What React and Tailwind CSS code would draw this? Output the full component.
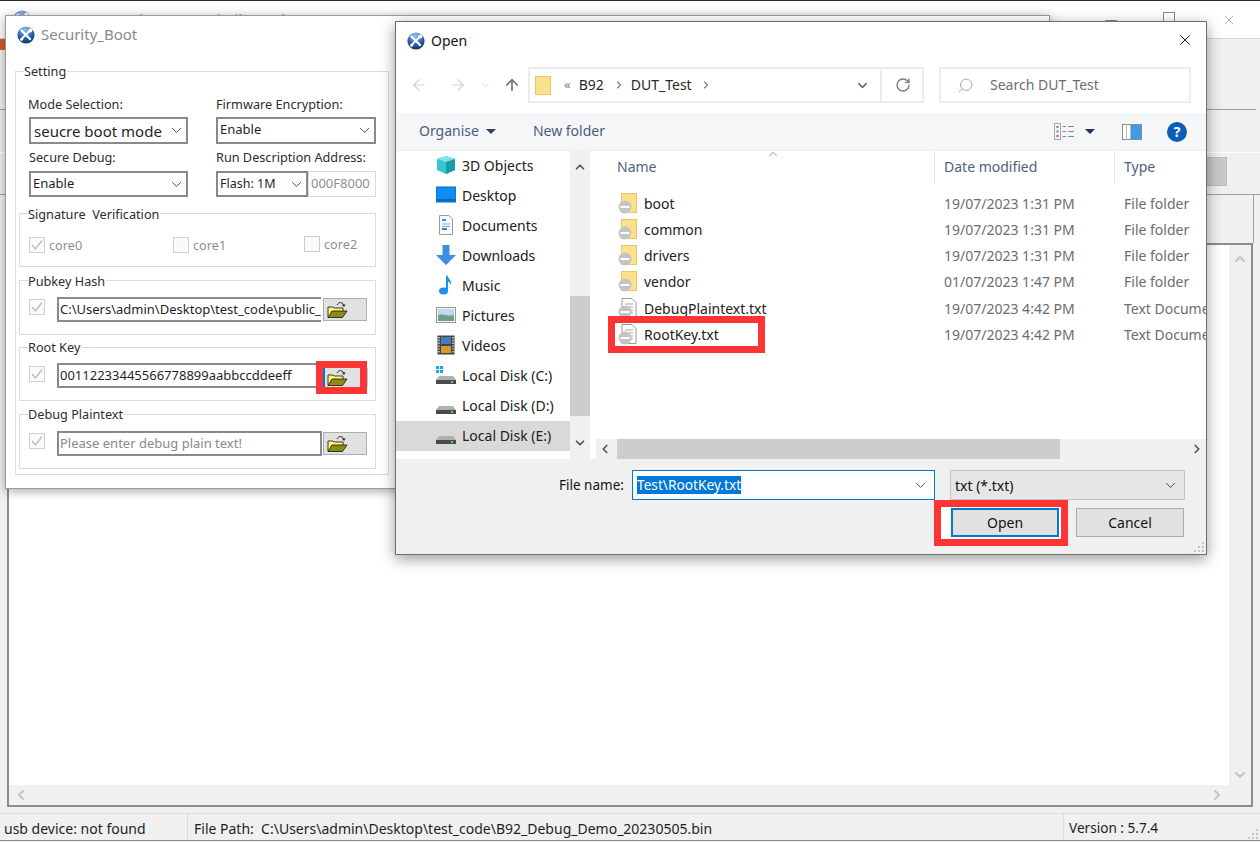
import React from "react";
import { ArrowLeft, ArrowRight, ArrowUp, ChevronDown, ChevronUp, ChevronLeft, ChevronRight, RotateCw, Search, X } from "lucide-react";

const AppIcon = ({ className = "" }) => (
  <svg viewBox="0 0 18 18" className={"w-[18px] h-[18px] " + className}>
    <defs>
      <radialGradient id="sph" cx="0.45" cy="0.2" r="0.9">
        <stop offset="0" stopColor="#9cc0ec" />
        <stop offset="0.5" stopColor="#2f68ac" />
        <stop offset="1" stopColor="#052650" />
      </radialGradient>
    </defs>
    <circle cx="9" cy="9" r="8.6" fill="url(#sph)" />
    <path d="M4.5 4.5 L13 13" stroke="#fff" strokeWidth="2.4" strokeLinecap="round" />
    <path d="M13.5 4 L5 12.5" stroke="#fff" strokeWidth="1.8" strokeLinecap="round" />
    <circle cx="13.4" cy="4.6" r="2" fill="#fff" />
    <circle cx="4.6" cy="13.2" r="1.5" fill="#fff" />
  </svg>
);

const OpenFolder = () => (
  <svg viewBox="0 0 21 18" className="w-[21px] h-[18px]">
    <path d="M1 16V6h5l1 1h9v3" fill="#ffff70" stroke="#222" strokeWidth="0.9" />
    <path d="M1 16.5 L5 10 H20 L15.5 16.5Z" fill="#8c8c12" stroke="#222" strokeWidth="0.9" />
    <path d="M10 4 C11.5 1 15 0.8 16.5 3.5" fill="none" stroke="#222" strokeWidth="1" />
    <path d="M14.8 3.6 H18.6 L17 6Z" fill="#222" />
  </svg>
);

const Check = ({ on = true }) => (
  <span className="w-[16px] h-[16px] shrink-0 border border-[#d0d0d0] bg-[#fafafa] flex items-center justify-center">
    {on && (
      <svg viewBox="0 0 14 14" className="w-[14px] h-[14px]">
        <path d="M2 7 L5.5 11 L12 2.5" fill="none" stroke="#bdbdbd" strokeWidth="1.4" />
      </svg>
    )}
  </span>
);

const Group = ({ title, className = "", legendClass = "-top-[9px]", children }) => (
  <div className={"relative border border-[#dcdcdc] " + className}>
    <span className={"absolute left-[8px] bg-white pr-[1px] text-[12.7px] leading-[18px] text-[#2d2d2d] whitespace-pre " + legendClass}>{title}</span>
    {children}
  </div>
);

const Chev = ({ className = "" }) => (
  <svg viewBox="0 0 12 8" className={"w-[11px] h-[7px] " + className}>
    <path d="M1 1.2 L6 6.2 L11 1.2" fill="none" stroke="#4a4a4a" strokeWidth="1.1" />
  </svg>
);

const Select = ({ children, className = "", textClass = "text-[13px] pl-[3px]", chevClass = "mr-[4px]" }) => (
  <div className={"flex items-center justify-between border-2 border-[#8a8a8a] bg-white " + className}>
    <span className={"text-[#1f1f1f] whitespace-nowrap " + textClass}>{children}</span>
    <Chev className={chevClass} />
  </div>
);

const FolderBtn = () => (
  <button className="w-[44px] h-[23px] mt-px bg-[#e1e1e1] border border-[#adadad] flex items-center pl-[3px] shrink-0">
    <OpenFolder />
  </button>
);

const Overlay = () => (
  <svg viewBox="0 0 14 14" className="absolute left-0 bottom-0 w-[14px] h-[14px]">
    <circle cx="7" cy="7" r="6.5" fill="#c4c4c4" />
    <rect x="2.5" y="6" width="9" height="2" fill="#fff" />
  </svg>
);

const FolderItem = () => (
  <span className="relative w-[20px] h-[21px] shrink-0 block">
    <span className="absolute left-[3px] top-0 w-[16px] h-[20px] bg-[#fde08a] border border-[#eac766]" />
    <Overlay />
  </span>
);

const DocItem = () => (
  <span className="relative w-[20px] h-[21px] shrink-0 block">
    <svg viewBox="0 0 16 20" className="absolute left-[3px] top-0 w-[16px] h-[20px]">
      <path d="M1 .5H11L15 4.5V19.5H1Z" fill="#fff" stroke="#9a9a9a" />
      <path d="M4 6H12M4 9H12M4 12H12M4 15H12" stroke="#a5a5a5" />
    </svg>
    <Overlay />
  </span>
);

const files = [
  ["boot", "19/07/2023 1:31 PM", "File folder", FolderItem],
  ["common", "19/07/2023 1:31 PM", "File folder", FolderItem],
  ["drivers", "19/07/2023 1:31 PM", "File folder", FolderItem],
  ["vendor", "01/07/2023 1:47 PM", "File folder", FolderItem],
  ["DebugPlaintext.txt", "19/07/2023 4:42 PM", "Text Document", DocItem],
  ["RootKey.txt", "19/07/2023 4:42 PM", "Text Document", DocItem],
];

const Cube = () => (
  <svg viewBox="0 0 20 20" className="w-[20px] h-[20px]">
    <path d="M10 1 L19 4 V15 L10 19 L1 15 V4Z" fill="#37c6d0" />
    <path d="M10 1 L19 4 L10 7 L1 4Z" fill="#7fe3e8" />
    <path d="M10 7 L19 4 V15 L10 19Z" fill="#1a9ba8" />
  </svg>
);
const Desk = () => (
  <svg viewBox="0 0 20 20" className="w-[20px] h-[20px]">
    <rect x="0" y="2" width="20" height="15" fill="#0f8df0" stroke="#0a66b8" />
    <rect x="1" y="14" width="18" height="2" fill="#0a66b8" />
  </svg>
);
const Docs = () => (
  <svg viewBox="0 0 20 20" className="w-[20px] h-[20px]">
    <path d="M3.5 .5H13L16.5 4V19.5H3.5Z" fill="#fafafa" stroke="#9a9a9a" />
    <path d="M6 5H10" stroke="#3a8fdc" strokeWidth="2" />
    <path d="M6 9H14M6 11.5H14" stroke="#6fb1e6" />
    <path d="M6 14H11" stroke="#3f8f6a" strokeWidth="2" />
  </svg>
);
const Down = () => (
  <svg viewBox="0 0 20 20" className="w-[20px] h-[20px]">
    <path d="M6.5 0H13.5V10H20L10 20L0 10H6.5Z" fill="#3d8fdf" />
  </svg>
);
const Music = () => (
  <svg viewBox="0 0 20 20" className="w-[20px] h-[20px]">
    <ellipse cx="7.5" cy="16" rx="4.5" ry="3.6" fill="#1e90e8" />
    <path d="M10 16V0.5H11.5C12 4 16 5 15 10.5C14.5 7.5 13 7 12 6.5V16Z" fill="#1e90e8" />
  </svg>
);
const Pics = () => (
  <svg viewBox="0 0 20 20" className="w-[20px] h-[20px]">
    <rect x=".5" y="2.5" width="19" height="15" fill="#f5f5f5" stroke="#9a9a9a" />
    <rect x="2" y="4" width="16" height="7" fill="#bcd9ee" />
    <path d="M2 16V10 C7 8 12 12 18 10V16Z" fill="#6f9f8a" />
  </svg>
);
const Vids = () => (
  <svg viewBox="0 0 20 20" className="w-[20px] h-[20px]">
    <rect x="1.5" y="0.5" width="17" height="19" fill="#444" />
    <rect x="5" y="2" width="10" height="7" fill="#3d7fc4" />
    <rect x="5" y="11" width="10" height="7" fill="#d99a2b" />
    <path d="M3 2V18M17 2V18" stroke="#ddd" strokeWidth="1.4" strokeDasharray="1.4 1.4" />
  </svg>
);
const Drive = ({ win }) => (
  <svg viewBox="0 0 20 20" className="w-[20px] h-[20px]">
    {win && <path d="M0 1H3V4H0ZM4 1H7V4H4ZM0 5H3V8H0ZM4 5H7V8H4Z" fill="#19a5e8" />}
    <path d="M3 11 H17 L20 15 H0Z" fill="#b0b0b0" />
    <rect x="0" y="15" width="20" height="4" fill="#4a4a4a" />
    <rect x="15" y="16" width="2" height="2" fill="#5fd35f" />
  </svg>
);

const nav = [
  ["3D Objects", Cube],
  ["Desktop", Desk],
  ["Documents", Docs],
  ["Downloads", Down],
  ["Music", Music],
  ["Pictures", Pics],
  ["Videos", Vids],
  ["Local Disk (C:)", () => <Drive win />],
  ["Local Disk (D:)", () => <Drive />],
  ["Local Disk (E:)", () => <Drive />],
];

const Grip = () => (
  <svg viewBox="0 0 12 12" className="w-[12px] h-[12px]">
    <path d="M9 1h2v2H9zM5 5h2v2H5zM9 5h2v2H9zM1 9h2v2H1zM5 9h2v2H5zM9 9h2v2H9z" fill="#c4c4c4" />
  </svg>
);

function MainWindow() {
  return (
    <div className="h-[841px] w-[1260px] flex flex-col bg-[#f0f0f0] text-[#1f1f1f]">
      <div className="h-[38px] bg-white border-b border-[#d5d5d5] flex items-start shrink-0">
        <AppIcon className="ml-[13px] mt-[9px] shrink-0" />
        <span className="ml-[6px] mt-[7px] text-[15px] leading-[22px] text-[#808080] whitespace-nowrap">BDT connected to Non-volatile Device</span>
        <div className="ml-auto flex items-start mr-[23px] mt-[11px] text-[#7a7a7a]">
          <span className="w-[12px] h-px bg-[#8a8a8a] mt-[8px]" />
          <span className="ml-[46px] w-[12px] h-[12px] border border-[#8a8a8a]" />
          <X size={16} strokeWidth={1} className="ml-[46px] text-[#8a8a8a]" />
        </div>
      </div>
      <div className="h-[71px] shrink-0 border-b border-[#a0a0a0] mr-[4px]">
        <div className="w-[5px] h-[11px] bg-[#d9572b]" />
      </div>
      <div className="h-[43px] shrink-0 border-b border-white" />
      <div className="h-[42px] shrink-0 border-b border-[#a0a0a0] flex justify-end items-start pt-[4px] pr-[33px]">
        <div className="w-[60px] h-[29px] bg-[#c9c9c9] border border-[#bcbcbc]" />
      </div>
      <div className="h-[48px] shrink-0 mr-[6px] border-r border-[#a0a0a0]" />
      <div className="h-[564px] shrink-0 mx-[7px] mr-[7px] border-2 border-[#8c8c8c] flex flex-col bg-[#f0f0f0]">
        <div className="flex-1 flex min-h-0">
          <div className="flex-1 bg-white" />
          <div className="w-[22px] flex flex-col items-center justify-between pt-[6px] pb-[2px]">
            <ChevronUp size={16} className="text-[#c4c4c4]" strokeWidth={3} />
            <ChevronDown size={16} className="text-[#c4c4c4]" strokeWidth={3} />
          </div>
        </div>
        <div className="h-[20px] shrink-0 flex items-center justify-between pl-[4px] pr-[26px]">
          <ChevronLeft size={16} className="text-[#c4c4c4]" strokeWidth={3} />
          <ChevronRight size={16} className="text-[#c4c4c4]" strokeWidth={3} />
        </div>
      </div>
      <div className="h-[7px] shrink-0 border-b border-[#dcdcdc]" />
      <div className="h-[27px] flex items-center shrink-0 border-b border-[#8a8a8a] text-[14px] text-[#1f1f1f] whitespace-nowrap">
        <span className="w-[188px] pl-[4px] pt-[2px] border-r border-[#dcdcdc] h-full flex items-center">usb device: not found</span>
        <span className="w-[876px] pl-[6px] pt-[2px] border-r border-[#dcdcdc] h-full flex items-center whitespace-pre">File Path:  C:\Users\admin\Desktop\test_code\B92_Debug_Demo_20230505.bin</span>
        <span className="pl-[5px] pt-[2px] flex-1 flex items-center h-full text-[13.6px]">Version : 5.7.4</span>
        <span className="mr-[1px] self-end"><Grip /></span>
      </div>
    </div>
  );
}

function SecurityWindow() {
  return (
    <div className="absolute left-[5px] top-[15px] w-[1045px] h-[474px] bg-white border border-[#9a9a9a] shadow-[0_2px_10px_rgba(0,0,0,0.35)]">
      <div className="h-[55px] flex items-start pl-[11px] pt-[10px]">
        <AppIcon className="shrink-0" />
        <span className="ml-[6px] text-[15px] leading-[20px] text-[#8a8a8a] -mt-[2px]">Security_Boot</span>
      </div>
      <div className="relative ml-[9px] w-[374px] h-[404px] border border-[#dcdcdc]">
        <span className="absolute left-[8px] -top-[10px] bg-white pr-[1px] text-[12.7px] leading-[18px] text-[#2d2d2d]">Setting</span>
        <div className="pt-[24px] pl-[13px] grid grid-cols-[159px_160px] gap-x-[28px] text-[12.7px] text-[#2d2d2d]">
          <div>
            <div className="h-[21px] leading-[16px] whitespace-nowrap -ml-px">Mode Selection:</div>
            <Select className="h-[27px]" textClass="text-[15px] pl-[3px] pt-[2px]">seucre boot mode</Select>
          </div>
          <div>
            <div className="h-[21px] leading-[16px] whitespace-nowrap">Firmware Encryption:</div>
            <Select className="h-[27px]" textClass="text-[13px] pl-[2px] pb-[2px]">Enable</Select>
          </div>
          <div className="mt-[5px]">
            <div className="h-[22px] leading-[17px] whitespace-nowrap">Secure Debug:</div>
            <Select className="h-[26px]" textClass="text-[13px] pl-[2px]">Enable</Select>
          </div>
          <div className="mt-[5px]">
            <div className="h-[22px] leading-[17px] whitespace-nowrap">Run Description Address:</div>
            <div className="flex h-[26px]">
              <Select className="w-[92px] h-[26px]" textClass="text-[12.5px] pl-[2px]">Flash: 1M</Select>
              <div className="flex-1 border border-[#dcdcdc] flex items-center pl-[2px] text-[13px] text-[#8f8f8f]">000F8000</div>
            </div>
          </div>
        </div>
        <Group title="Signature  Verification" className="ml-[3px] mt-[16px] w-[357px] h-[54px]">
          <div className="pl-[9px] pt-[23px] flex items-start text-[12.7px] text-[#8f8f8f] leading-[16px]">
            <div className="w-[144px] flex gap-[4px]"><Check /><span>core0</span></div>
            <div className="w-[131px] flex gap-[4px]"><Check on={false} /><span>core1</span></div>
            <div className="flex gap-[4px] -mt-px"><Check on={false} /><span>core2</span></div>
          </div>
        </Group>
        <Group title="Pubkey Hash" className="ml-[3px] mt-[13px] w-[357px] h-[55px]">
          <div className="pl-[9px] pt-[16px] flex items-start">
            <span className="mt-[2px] mr-[12px]"><Check /></span>
            <div className="w-[264px] h-[25px] border-2 border-r-0 border-[#8a8a8a] pl-[1px] text-[13px] leading-[21px] text-[#1f1f1f] overflow-hidden whitespace-nowrap">C:\Users\admin\Desktop\test_code\public_</div>
            <span className="ml-[2px]"><FolderBtn /></span>
          </div>
        </Group>
        <Group title="Root Key" legendClass="-top-[10px]" className="ml-[3px] mt-[12px] w-[357px] h-[54px]">
          <div className="pl-[9px] pt-[15px] flex items-start">
            <span className="mt-[3px] mr-[12px]"><Check /></span>
            <div className="w-[259px] h-[25px] border-2 border-r-0 border-[#8a8a8a] pl-[1px] text-[13px] leading-[21px] text-[#1f1f1f] whitespace-nowrap overflow-hidden">00112233445566778899aabbccddeeff</div>
            <div className="-mt-[2px] w-[51px] h-[33px] border-[7px] border-[#fc3434] shrink-0">
              <div className="w-full h-full bg-[#e1e1e1] border-l-2 border-[#0078d7] flex items-center pl-[2px] overflow-hidden"><OpenFolder /></div>
            </div>
            <span className="w-px h-[19px] mt-[5px] bg-[#a8cde8]" />
          </div>
        </Group>
        <Group title="Debug Plaintext" legendClass="-top-[10px]" className="ml-[3px] mt-[13px] w-[357px] h-[55px]">
          <div className="pl-[9px] pt-[16px] flex items-start">
            <span className="mt-[2px] mr-[12px]"><Check /></span>
            <div className="w-[265px] h-[25px] border-2 border-[#8a8a8a] pl-[1px] text-[13px] leading-[21px] text-[#8a8a8a] whitespace-nowrap">Please enter debug plain text!</div>
            <span className="ml-px"><FolderBtn /></span>
          </div>
        </Group>
      </div>
    </div>
  );
}

function OpenDialog() {
  return (
    <div className="absolute left-[395px] top-[21px] w-[812px] h-[534px] bg-white border border-[#6e6e6e] shadow-[0_4px_14px_rgba(0,0,0,0.4)] flex flex-col">
      <div className="h-[38px] shrink-0 flex items-center pl-[11px] pr-[12px]">
        <AppIcon className="shrink-0 -mt-px" />
        <span className="ml-[6px] text-[14px] text-[#111] -mt-[2px]">Open</span>
        <X size={18} strokeWidth={1.2} className="ml-auto text-black -mt-[2px]" />
      </div>
      <div className="h-[53px] shrink-0 flex items-start pt-[7px]">
        <div className="w-[132px] h-[36px] shrink-0 flex items-center text-[#d2d2d2]">
          <ArrowLeft size={18} strokeWidth={1.6} className="ml-[14px]" />
          <ArrowRight size={18} strokeWidth={1.6} className="ml-[21px]" />
          <ChevronDown size={11} strokeWidth={2} className="ml-[13px]" />
          <ArrowUp size={18} strokeWidth={2.2} className="ml-[12px] text-[#6f6f6f]" />
        </div>
        <div className="w-[396px] h-[36px] shrink-0 border-2 border-[#ececec] flex items-center text-[14px] text-[#2a2a2a] pb-[2px]">
          <span className="relative ml-[5px] mt-[2px] w-[16px] h-[19px] bg-[#fde08a] border border-[#eac766]" />
          <span className="ml-[13px] text-[#7a7a7a] text-[13px] leading-none">«</span>
          <span className="ml-[8px]">B92</span>
          <ChevronRight size={12} strokeWidth={2.2} className="ml-[9px] mt-[2px] text-[#777]" />
          <span className="ml-[6px]">DUT_Test</span>
          <ChevronRight size={12} strokeWidth={2.2} className="ml-[8px] mt-[2px] text-[#777]" />
          <ChevronDown size={15} strokeWidth={2.4} className="ml-auto mr-[10px] mt-[2px] text-[#6a6a6a]" />
          <span className="w-[42px] h-[34px] -mb-[2px] border-l-2 border-[#ececec] flex items-center justify-center pl-[2px]">
            <RotateCw size={16} strokeWidth={2} className="text-[#7a7a7a]" />
          </span>
        </div>
        <div className="ml-[15px] w-[252px] h-[36px] shrink-0 border-2 border-[#ececec] flex items-center text-[14px] text-[#6d6d6d] pb-[2px]">
          <Search size={17} strokeWidth={1} className="ml-[16px] mt-[2px] -scale-x-100 text-[#8a8a8a]" />
          <span className="ml-[16px]">Search DUT_Test</span>
        </div>
      </div>
      <div className="h-[38px] shrink-0 bg-[#f5f6f7] flex items-center text-[14px] text-[#4a5d7e] border-b border-[#eef0f2]">
        <span className="ml-[23px] -mt-[2px]">Organise</span>
        <span className="ml-[7px] w-0 h-0 border-x-[5px] border-x-transparent border-t-[5px] border-t-[#2c3f63]" />
        <span className="ml-[37px] -mt-[2px]">New folder</span>
        <svg viewBox="0 0 21 17" className="ml-auto w-[21px] h-[17px]">
          <rect x=".5" y=".5" width="6" height="16" fill="#f5f5f5" stroke="#a8a8a8" />
          <rect x="2.5" y="3" width="2" height="2" fill="#6a7a9a" />
          <rect x="2.5" y="7.5" width="2" height="2" fill="#3d8fdf" />
          <rect x="2.5" y="12" width="2" height="2" fill="#d94a4a" />
          <path d="M8.5 3.5H12M14 3.5H20M8.5 8.5H12M14 8.5H20M8.5 13.5H12M14 13.5H20" stroke="#8a8a8a" />
        </svg>
        <span className="ml-[10px] w-0 h-0 border-x-[5px] border-x-transparent border-t-[5px] border-t-[#1f3560]" />
        <span className="ml-[27px] w-[20px] h-[16px] border border-[#8d8d8d] flex bg-white">
          <span className="w-[4px] bg-[#fff] border-r border-[#bdbdbd]" />
          <span className="w-[4px] bg-[#fff] border-r border-[#bdbdbd]" />
          <span className="flex-1 bg-[#3f9ae8]" />
        </span>
        <span className="ml-[25px] mr-[19px] w-[20px] h-[20px] rounded-full bg-[#0a5fb4] text-white text-[14px] font-bold flex items-center justify-center leading-none">?</span>
      </div>
      <div className="h-[308px] shrink-0 flex">
        <div className="w-[174px] shrink-0 flex flex-col text-[14px] text-[#202020]">
          {nav.map(([name, Icon]) => (
            <div key={name} className={"h-[30px] shrink-0 flex items-center pl-[40px] pb-[2px] gap-[6px] " + (name === "Local Disk (E:)" ? "bg-[#d9d9d9]" : "")}>
              <Icon />
              <span className="whitespace-nowrap">{name}</span>
            </div>
          ))}
        </div>
        <div className="w-[20px] shrink-0 bg-[#f0f0f0] flex flex-col items-center justify-between py-[9px] relative">
          <ChevronUp size={14} strokeWidth={3} className="text-[#555]" />
          <div className="absolute left-0 top-[145px] w-full h-[120px] bg-[#cdcdcd]" />
          <ChevronDown size={14} strokeWidth={3} className="text-[#555]" />
        </div>
        <div className="flex-1 ml-[6px] flex flex-col min-w-0">
          <div className="h-[32px] shrink-0 relative flex text-[14px] text-[#4f617e]">
            <span className="w-[339px] pl-[21px] pb-[2px] flex items-center border-r border-[#e5e5e5]">Name</span>
            <span className="w-[180px] pl-[9px] pb-[2px] flex items-center border-r border-[#e5e5e5]">Date modified</span>
            <span className="pl-[9px] pb-[2px] flex items-center">Type</span>
            <ChevronUp size={14} strokeWidth={1.4} className="absolute left-[170px] -top-[4px] text-[#8a8a8a]" />
          </div>
          <div className="flex-1 pt-[7px] pl-[22px] min-h-0 overflow-hidden">
            {files.map(([name, date, type, Icon]) => (
              <div key={name} className="h-[26.25px] flex items-center text-[14px] whitespace-nowrap">
                <span className="w-[326px] shrink-0 flex items-center gap-[6px] text-[#222]">
                  <Icon />
                  {name}
                </span>
                <span className="w-[180px] shrink-0 text-[#6d6d6d]">{date}</span>
                <span className="text-[#6d6d6d]">{type}</span>
              </div>
            ))}
          </div>
          <div className="h-[20px] shrink-0 bg-[#f0f0f0] flex items-center relative justify-between px-[2px]">
            <ChevronLeft size={14} strokeWidth={3} className="text-[#555]" />
            <div className="absolute left-[21px] top-0 w-[443px] h-full bg-[#cdcdcd]" />
            <ChevronRight size={14} strokeWidth={3} className="text-[#555]" />
          </div>
        </div>
      </div>
      <div className="flex-1 bg-[#f0f0f0] relative">
        <div className="flex items-center pt-[11px] h-[41px]">
          <span className="ml-[163px] w-[73px] text-[13.5px] text-[#111] whitespace-nowrap">File name:</span>
          <div className="w-[303px] h-[30px] border border-[#0078d7] bg-white flex items-center pl-[4px]">
            <span className="bg-[#0078d7] text-white text-[13.7px] leading-[18px]">Test\RootKey.txt</span>
            <Chev className="ml-auto mr-[8px]" />
          </div>
          <div className="ml-[15px] w-[235px] h-[30px] border border-[#c4c4c4] bg-[#e6e6e6] flex items-center pl-[4px] text-[14px] text-[#111]">
            txt (*.txt)
            <Chev className="ml-auto mr-[8px]" />
          </div>
        </div>
        <div className="flex justify-end pr-[22px]">
          <div className="w-[134px] h-[46px] border-[7px] border-[#fc3434] bg-white flex items-center justify-end pr-[2px]">
            <button className="w-[108px] h-[29px] -mt-px bg-[#e1e1e1] border-2 border-[#0078d7] text-[14px] text-[#111]">Open</button>
          </div>
          <button className="ml-[8px] mt-[8px] w-[108px] h-[29px] bg-[#e1e1e1] border border-[#adadad] text-[14px] text-[#111]">Cancel</button>
        </div>
        <span className="absolute right-[1px] bottom-[1px]"><Grip /></span>
      </div>
    </div>
  );
}

function RedFile() {
  return <div className="absolute left-[608px] top-[316px] w-[157px] h-[37px] border-[7px] border-[#fc3434]" />;
}

export default function App() {
  return (
    <div className="relative w-[1260px] h-[842px] overflow-hidden bg-[#2b2b2b] pt-px font-['Noto_Sans',sans-serif]">
      <MainWindow />
      <SecurityWindow />
      <OpenDialog />
      <RedFile />
    </div>
  );
}
